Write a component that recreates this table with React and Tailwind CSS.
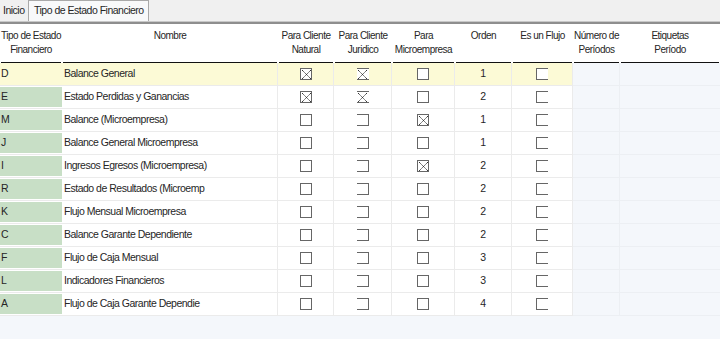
import React from "react";

const rows = [
  { code: "D", name: "Balance General", nat: true, jur: true, micro: false, orden: 1 },
  { code: "E", name: "Estado Perdidas y Ganancias", nat: true, jur: true, micro: false, orden: 2 },
  { code: "M", name: "Balance (Microempresa)", nat: false, jur: false, micro: true, orden: 1 },
  { code: "J", name: "Balance General Microempresa", nat: false, jur: false, micro: false, orden: 1 },
  { code: "I", name: "Ingresos Egresos  (Microempresa)", nat: false, jur: false, micro: true, orden: 2 },
  { code: "R", name: "Estado de Resultados (Microemp", nat: false, jur: false, micro: false, orden: 2 },
  { code: "K", name: "Flujo Mensual Microempresa", nat: false, jur: false, micro: false, orden: 2 },
  { code: "C", name: "Balance Garante Dependiente", nat: false, jur: false, micro: false, orden: 2 },
  { code: "F", name: "Flujo de Caja Mensual", nat: false, jur: false, micro: false, orden: 3 },
  { code: "L", name: "Indicadores Financieros", nat: false, jur: false, micro: false, orden: 3 },
  { code: "A", name: "Flujo de Caja Garante Dependie", nat: false, jur: false, micro: false, orden: 4 },
];

const headers = [
  ["Tipo de Estado", "Financiero"],
  ["Nombre"],
  ["Para Cliente", "Natural"],
  ["Para Cliente", "Juridico"],
  ["Para", "Microempresa"],
  ["Orden"],
  ["Es un Flujo"],
  ["Número de", "Períodos"],
  ["Etiquetas", "Período"],
];

const cols = "grid grid-cols-[62px_216px_56px_58px_63px_57px_61px_47px_100px]";

function Check({ checked, variant }) {
  // variant trims a side of the box the way this grid paints it
  const sides =
    variant === "right"
      ? "border-t border-b border-r border-l-0"
      : variant === "left"
      ? "border-t border-b border-l border-r-0"
      : "border";
  const hourglass = variant === "right" && checked;
  return (
    <span
      className={`relative block w-[12px] h-[12px] ${hourglass ? "border-t border-b border-l-0 border-r-0" : sides} border-[#666] bg-white`}
    >
      {checked && (
        <svg className="absolute inset-0" width="12" height="12" viewBox="0 0 12 12">
          <path d="M1 1 L10 10 M10 1 L1 10" stroke="#333" strokeWidth="1" strokeDasharray="1.4 0.5" fill="none" />
        </svg>
      )}
    </span>
  );
}

export default function App() {
  return (
    <div
      className="w-[720px] h-[339px] overflow-hidden bg-[#f4f7fb] text-[#262626]"
      style={{ fontFamily: '"Liberation Sans", Arial, sans-serif' }}
    >
      {/* tab strip */}
      <div className="h-[21px] bg-[#f0f0f0] flex items-end text-[10.5px] tracking-[-0.5px] whitespace-nowrap">
        <div className="h-[21px] flex items-center px-[3px] w-[28px]">Inicio</div>
        <div className="h-[21px] flex items-center px-[5px] w-[121px] bg-[#f8f9fa] border border-b-0 border-[#a9a9a9]">
          Tipo de Estado Financiero
        </div>
      </div>
      <div className="h-[1px] bg-[#c8c8c8]" />
      <div className="h-[2px] bg-[#8e8e8e]" />

      {/* header */}
      <div className={`${cols} bg-white h-[39px] text-[10px] tracking-[-0.5px] leading-[14px]`}>
        {headers.map((h, i) => (
          <div key={i} className="mx-[1px] border-b border-[#111] flex flex-col items-center pt-[5px] text-center whitespace-nowrap">
            {h.map((line, j) => (
              <span key={j}>{line}</span>
            ))}
          </div>
        ))}
      </div>

      {/* rows */}
      <div className="text-[10.5px] tracking-[-0.5px]">
        {rows.map((r, i) => {
          const sel = i === 0;
          const cell = `h-[23px] flex items-center border-b border-r border-[#ebebeb] ${sel ? "bg-[#fcfad6]" : "bg-white"}`;
          return (
            <div key={i} className={cols}>
              <div className={`h-[23px] border-b border-[#ebebeb] ${sel ? "bg-[#fcfad6]" : "bg-white"} py-[1px]`}>
                <div className={`h-full flex items-center pl-[1px] ${sel ? "" : "bg-[#c8dfc6]"}`}>{r.code}</div>
              </div>
              <div className={`${cell} pl-[2px]`}>{r.name}</div>
              <div className={`${cell} justify-center`}>
                <Check checked={r.nat} />
              </div>
              <div className={`${cell} justify-center`}>
                <Check checked={r.jur} variant="right" />
              </div>
              <div className={`${cell} justify-center`}>
                <Check checked={r.micro} />
              </div>
              <div className={`${cell} justify-center`}>{r.orden}</div>
              <div className={`${cell} justify-center`}>
                <Check checked={false} variant="left" />
              </div>
              <div className="h-[23px] border-b border-r border-[#eceff3]" />
              <div className="h-[23px] border-b border-[#eceff3]" />
            </div>
          );
        })}
      </div>
    </div>
  );
}
